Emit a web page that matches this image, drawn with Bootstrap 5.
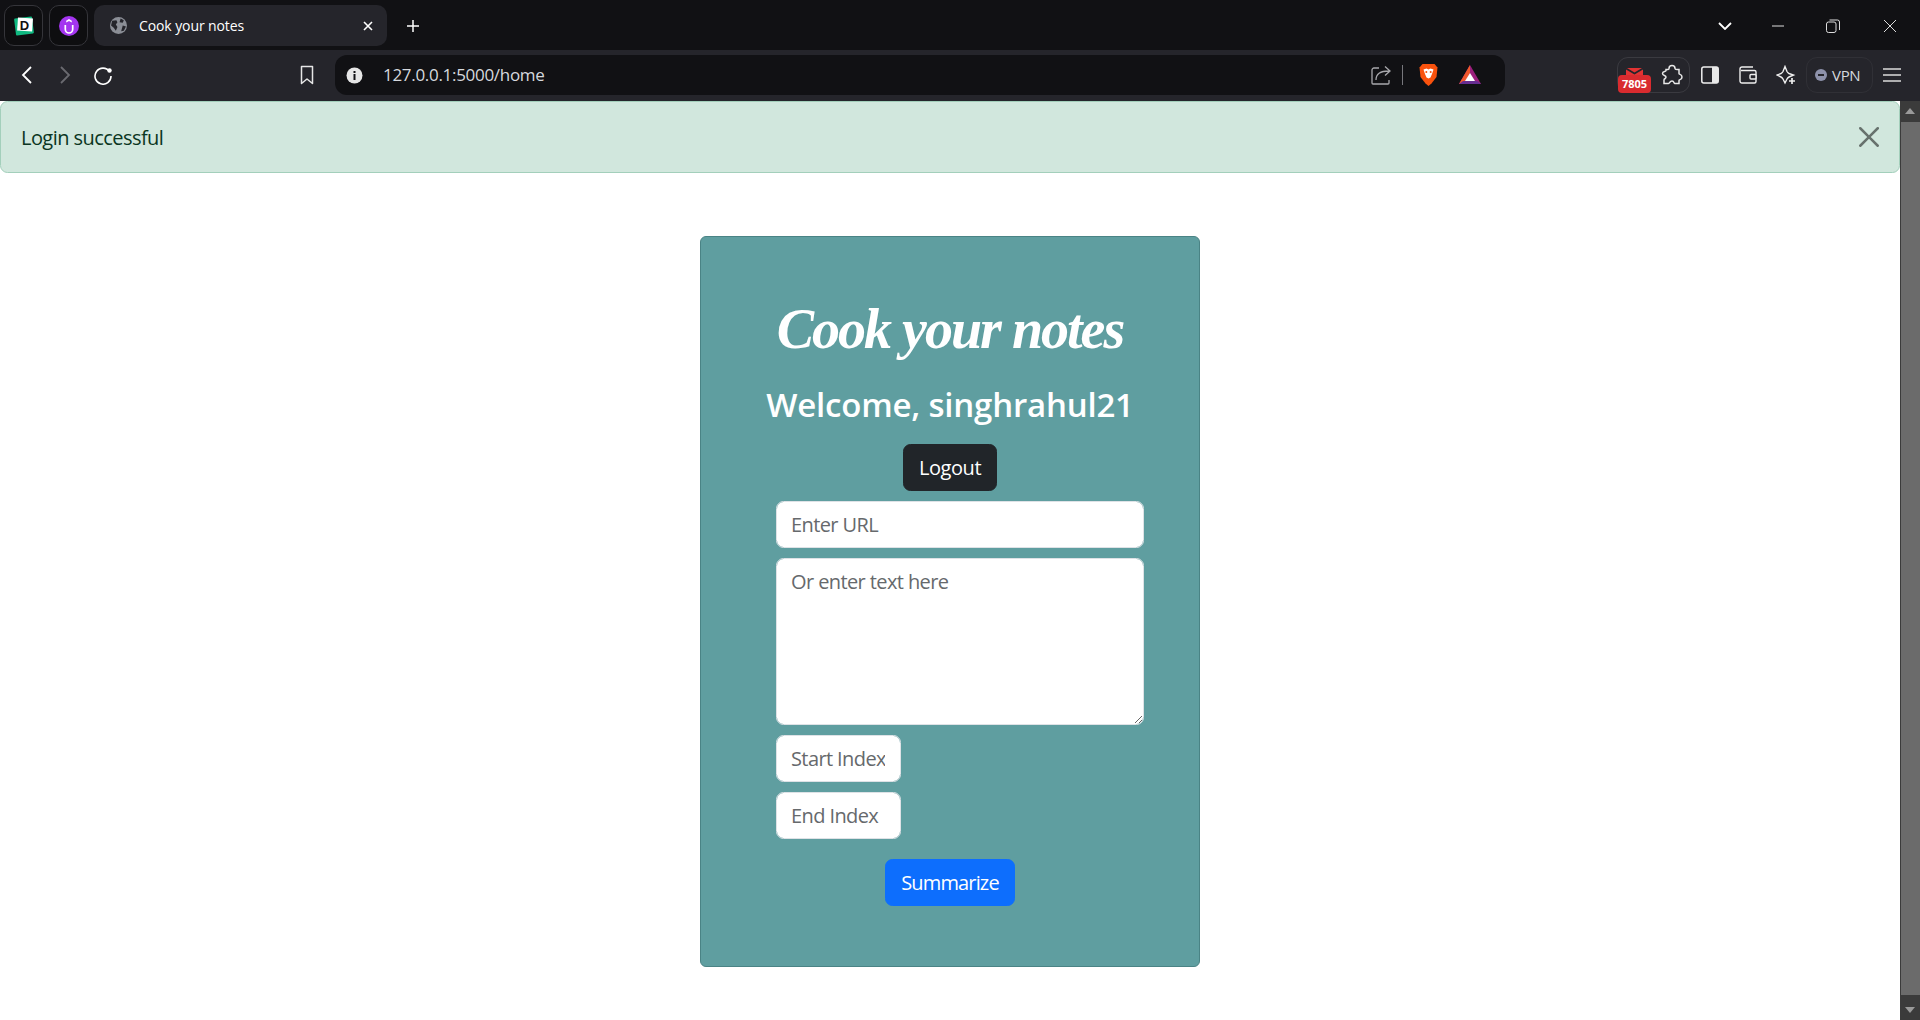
<!DOCTYPE html>
<html lang="en">
<head>
<meta charset="utf-8">
<title>Cook your notes</title>
<link href="https://cdn.jsdelivr.net/npm/bootstrap@5.3.0/dist/css/bootstrap.min.css" rel="stylesheet">
<style>
html{font-size:20px}
body{font-family:"Open Sans","Noto Sans",sans-serif;height:1020px;overflow:hidden;background:#fff}
.tabstrip{height:50px;background:#111114;color:#fff;padding:5px 0 4px 4px}
.pin{width:39px;height:41px;border:1px solid #35353a;border-radius:10px;margin-right:6px;background:#0e0e10}
.acttab{width:293px;height:41px;background:#25252b;border-radius:10px;padding:0 14px 0 16px;font:14px "Open Sans",sans-serif;letter-spacing:-.1px}
.tabtitle{margin-left:12px}
.plus{width:52px;height:41px}
.winbtns{margin-left:auto}
.winbtn{height:41px}
.wb1{width:50px}
.wb2{width:56px}
.wb3{width:54px}
.wb4{width:60px}
.toolbar{height:51px;background:#25252b;padding:5px 0 6px 8px}
.slot{width:38px;height:40px;flex:none}
.gapslot{width:166px}
.addr{width:1170px;height:40px;background:#111114;border-radius:12px;margin-left:9px;margin-right:112px;padding:0 24px 0 11px;color:#d6d9de;font-size:17px;letter-spacing:-.3px}
.addr-url{margin-left:20px}
.sepline{width:1px;height:20px;background:#77777c}
.extbox{width:73px;height:36px;border:1px solid #3a3a40;border-radius:11px;position:relative;margin-right:1px;padding-left:42px}
.redbadge{position:absolute;left:0;bottom:-1px;width:33px;height:18px;background:#d92b2f;border-radius:4px;color:#fff;font:700 11px/18px "Open Sans",sans-serif;text-align:center}
.redenv{position:absolute;left:8px;top:10px}
.vpnpill{width:67px;height:36px;border:1px solid #303036;border-radius:11px;color:#d6d9de;font-size:15px;letter-spacing:-.3px;gap:5px;padding-left:8px;margin-left:1px}
.vpndot{width:12px;height:12px;border-radius:50%;background:#8e92ab;position:relative}
.vpndot::after{content:"";position:absolute;left:3px;right:3px;top:5px;height:2px;background:#25252b}
.pagewrap{height:919px}
.pagemain{width:1900px;overflow:hidden}
.flash{margin-bottom:63px;letter-spacing:-.55px;color:#0a3622;padding-top:21px;padding-bottom:19px}
.notecard{width:500px;height:731px;background:#5f9ea0;border:1px solid #4a8385;border-radius:6px;padding-top:54px;color:#fff}
.scripthead{font-family:"Liberation Serif",serif;font-style:italic;font-weight:700;font-size:56px;line-height:76px;margin:0 0 17px;letter-spacing:-2px}
.welcome{font-size:33px;line-height:42px;font-weight:600;margin:0 0 18px;letter-spacing:-.2px}
.noteform{width:368px;margin-left:75px;margin-top:10px}
.noteform .form-control{margin-bottom:10px;padding-left:14px}
.noteform .form-control::placeholder{letter-spacing:-.6px;color:#66696c}
.notearea{height:167px}
.idx{width:125px}
.actionbtn{letter-spacing:-.42px}
.sumbtn{letter-spacing:-.85px}
.fakebar{width:20px;background:#3b3b3b;position:relative}
.thumb{position:absolute;left:1px;right:0;top:21px;height:873px;background:#6b6b6b}
.arr{position:absolute;left:5px;width:0;height:0;border-left:5px solid transparent;border-right:5px solid transparent}
.arr-up{top:7px;border-bottom:6px solid #9a9a9a}
.arr-dn{bottom:7px;border-top:6px solid #9a9a9a}
svg{display:block}
</style>
</head>
<body>
<div class="tabstrip d-flex align-items-center">
  <div class="pin d-flex align-items-center justify-content-center">
    <svg width="22" height="22" viewBox="0 0 22 22"><rect x="2" y="2.5" width="18" height="17" rx="1" fill="#10b981" transform="rotate(-7 11 11)"/><rect x="4.5" y="3" width="15" height="13" fill="#fff" transform="rotate(4 11 10)"/><text x="11.5" y="14.5" font-family="Liberation Sans" font-weight="700" font-size="13" text-anchor="middle" fill="#111">D</text></svg>
  </div>
  <div class="pin d-flex align-items-center justify-content-center">
    <svg width="20" height="20" viewBox="0 0 20 20"><circle cx="10" cy="10" r="10" fill="#a435f0"/><path d="M6.3 9v4.3a3.7 3.7 0 0 0 7.4 0V9" fill="none" stroke="#fff" stroke-width="1.7"/><path d="M10 3 7.2 4.8V6.6L10 4.9l2.8 1.7V4.8z" fill="#fff"/></svg>
  </div>
  <div class="acttab d-flex align-items-center">
    <svg width="17" height="17" viewBox="0 0 16 16"><circle cx="8" cy="8" r="8" fill="#8b8e96"/><path d="M2 3.5 6 3l1 2-1.500 2L7 9.500 5.500 13 3.500 10 1 8zM10 1.500l3 1.500-1 2.500-3-.5zM12 8l3 1-2 4-2.500.500z" fill="#25252b"/></svg>
    <span class="tabtitle">Cook your notes</span>
    <svg class="ms-auto" width="10" height="10" viewBox="0 0 10 10"><path d="M1 1l8 8M9 1 1 9" stroke="#fff" stroke-width="1.600"/></svg>
  </div>
  <div class="plus d-flex align-items-center justify-content-center">
    <svg width="14" height="14" viewBox="0 0 14 14"><path d="M7 1v12M1 7h12" stroke="#fff" stroke-width="1.500"/></svg>
  </div>
  <div class="winbtns d-flex align-items-center">
    <div class="winbtn wb1 d-flex align-items-center justify-content-center"><svg width="14" height="8" viewBox="0 0 14 8"><path d="M1 1l6 6 6-6" fill="none" stroke="#fff" stroke-width="1.800"/></svg></div>
    <div class="winbtn wb2 d-flex align-items-center justify-content-center"><svg width="14" height="2" viewBox="0 0 14 2"><path d="M1 1h12" stroke="#ddd" stroke-width="1"/></svg></div>
    <div class="winbtn wb3 d-flex align-items-center justify-content-center"><svg width="14" height="14" viewBox="0 0 14 14"><rect x=".5" y="3" width="9.500" height="10.500" rx="2" fill="none" stroke="#ddd"/><path d="M3.500 1h8a2 2 0 0 1 2 2v8" fill="none" stroke="#ddd"/></svg></div>
    <div class="winbtn wb4 d-flex align-items-center justify-content-center"><svg width="14" height="14" viewBox="0 0 14 14"><path d="M1 1l12 12M13 1 1 13" stroke="#ddd" stroke-width="1"/></svg></div>
  </div>
</div>
<div class="toolbar d-flex align-items-center">
  <div class="slot d-flex align-items-center justify-content-center"><svg width="12" height="20" viewBox="0 0 12 20"><path d="M10 2 2 10l8 8" fill="none" stroke="#fff" stroke-width="1.800"/></svg></div>
  <div class="slot d-flex align-items-center justify-content-center"><svg width="12" height="20" viewBox="0 0 12 20"><path d="M2 2l8 8-8 8" fill="none" stroke="#6a6a70" stroke-width="1.800"/></svg></div>
  <div class="slot d-flex align-items-center justify-content-center"><svg width="20" height="20" viewBox="0 0 20 20"><path d="M16.500 6.500A8 8 0 1 0 18 11" fill="none" stroke="#fff" stroke-width="1.600"/><circle cx="16.500" cy="5.500" r="2.200" fill="#fff"/></svg></div>
  <div class="slot gapslot"></div>
  <div class="slot d-flex align-items-center justify-content-center"><svg width="14" height="20" viewBox="0 0 14 20"><path d="M1.500 1.500h11V18.500L7 14 1.500 18.500z" fill="none" stroke="#e6e6e6" stroke-width="1.500" stroke-linejoin="round"/></svg></div>
  <div class="addr d-flex align-items-center">
    <svg width="17" height="17" viewBox="0 0 17 17"><circle cx="8.500" cy="8.500" r="8" fill="#e6e6e6"/><rect x="7.500" y="7" width="2" height="6" fill="#111114"/><rect x="7.500" y="4" width="2" height="2" fill="#111114"/></svg>
    <span class="addr-url">127.0.0.1:5000/home</span>
    <div class="ms-auto d-flex align-items-center">
      <svg width="22" height="22" viewBox="0 0 22 22"><path d="M9 4H4a2 2 0 0 0-2 2v13a1 1 0 0 0 1 1h15a1 1 0 0 0 1-1v-3" fill="none" stroke="#a8a8ac" stroke-width="1.300"/><path d="M6 16c0-6 4-9 13-9M15 2.500 20 7l-5 4.500" fill="none" stroke="#a8a8ac" stroke-width="1.300"/></svg>
      <div class="ms-2 sepline"></div>
      <svg class="ms-2 ps-1" width="26" height="24" viewBox="0 0 20 24"><path d="M4 1h12l3 3.500-1 9.500-5 6.500-3 2.500-3-2.500-5-6.500-1-9.500z" fill="#f9520d"/><path d="M5 6.500l3-1 2 1 2-1 3 1-1.500 4.500L12 14.500l-2 1-2-1L6.500 11z" fill="#fff"/><circle cx="7.800" cy="9" r="1" fill="#f9520d"/><circle cx="12.200" cy="9" r="1" fill="#f9520d"/></svg>
      <svg class="ms-3" width="22" height="20" viewBox="0 0 22 20"><path d="M11 0 22 19H0z" fill="#9b1f7d"/><path d="M11 0 0 19h5L11 8z" fill="#f1582c"/><path d="M0 19l4-3h14l4 3z" fill="#662d91"/><path d="M11 8l5 8H6z" fill="#fff"/></svg>
    </div>
  </div>
  <div class="extbox d-flex align-items-center">
    <svg class="redenv" width="17" height="7" viewBox="0 0 17 7"><path d="M1 0h15L8.500 4.500zM0 1.500l8.500 5 8.500-5V7H0z" fill="#e23333"/></svg>
    <span class="redbadge">7805</span>
    <svg width="24" height="24" viewBox="0 0 24 24"><path d="M9 5.500c0-4 6-4 6 0 0 1 1 1 2 1h2v4c0 1.500 3 0 3 3.500s-3 2-3 3.500v3h-4c-1.500 0-.5-2.500-3-2.500s-2 2.500-3.500 2.500H4v-3.500c0-1.500 2-1 2-3s-3.500-1-3.500-3.500 3.500-1.500 3.500-3V6.500h2c1 0 1 0 1-1z" fill="none" stroke="#e8e8e8" stroke-width="1.500"/></svg>
  </div>
  <div class="slot d-flex align-items-center justify-content-center"><svg width="18" height="18" viewBox="0 0 18 18"><rect x=".8" y="1" width="16.400" height="16" rx="2" fill="none" stroke="#f0f0f0" stroke-width="1.500"/><rect x="11" y="1" width="6" height="16" fill="#e8e8e8"/></svg></div>
  <div class="slot d-flex align-items-center justify-content-center"><svg width="18" height="18" viewBox="0 0 18 18"><path d="M2 4.500h13.500a1.500 1.500 0 0 1 1.500 1.500v9.500a1.500 1.500 0 0 1-1.500 1.500H3a2 2 0 0 1-2-2V3a2 2 0 0 1 2-2h11" fill="none" stroke="#eee" stroke-width="1.400"/><rect x="11" y="8.500" width="6" height="4.500" rx="1" fill="#25252b" stroke="#eee" stroke-width="1.400"/></svg></div>
  <div class="slot d-flex align-items-center justify-content-center"><svg width="20" height="20" viewBox="0 0 20 20"><path d="M9 1.500 11 6.500c.5 1 1 1.500 2 2l4.500 1.500L13 12c-1 .5-1.500 1-2 2L9 18l-2-4c-.5-1-1-1.500-2-2L1 10l4-1.500c1-.5 1.500-1 2-2z" fill="none" stroke="#eee" stroke-width="1.400"/><path d="M16 13v6M13 16h6" stroke="#eee" stroke-width="1.700"/></svg></div>
  <div class="vpnpill d-flex align-items-center"><span class="vpndot"></span><span>VPN</span></div>
  <div class="slot d-flex align-items-center justify-content-center"><svg width="18" height="14" viewBox="0 0 18 14"><path d="M0 1h18M0 7h18M0 13h18" stroke="#dcdcdc" stroke-width="1.500"/></svg></div>
</div>
<div class="pagewrap d-flex">
  <div class="pagemain">
    <div class="alert alert-success alert-dismissible flash" role="alert">
      Login successful
      <button type="button" class="btn-close" aria-label="Close"></button>
    </div>
    <div class="notecard mx-auto text-center">
      <h1 class="scripthead">Cook your notes</h1>
      <h3 class="welcome">Welcome, singhrahul21</h3>
      <a class="btn btn-dark actionbtn" href="#">Logout</a>
      <form class="noteform text-start">
        <input class="form-control" type="text" placeholder="Enter URL">
        <textarea class="form-control notearea" placeholder="Or enter text here"></textarea>
        <input class="form-control idx" type="text" placeholder="Start Index">
        <input class="form-control idx" type="text" placeholder="End Index">
      </form>
      <button class="btn btn-primary sumbtn mt-2" type="button">Summarize</button>
    </div>
  </div>
  <div class="fakebar flex-grow-1">
    <span class="arr arr-up"></span>
    <div class="thumb"></div>
    <span class="arr arr-dn"></span>
  </div>
</div>
</body>
</html>
